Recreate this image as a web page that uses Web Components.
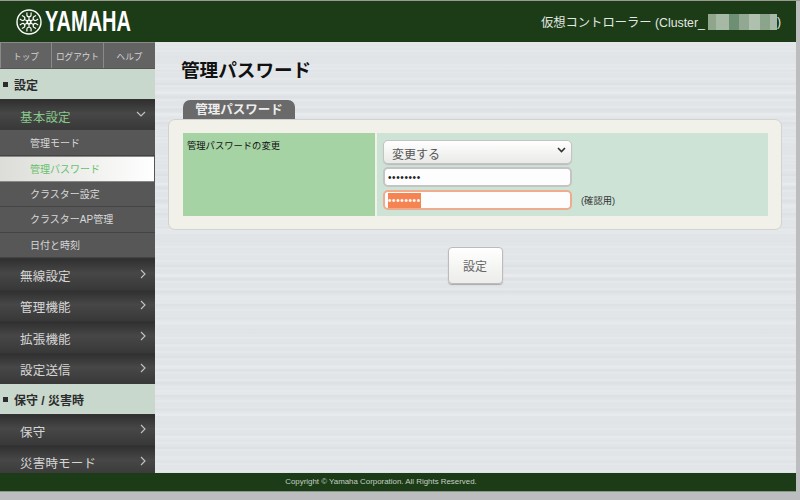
<!DOCTYPE html>
<html lang="ja">
<head>
<meta charset="utf-8">
<title>管理パスワード</title>
<style>
html, body { margin: 0; height: 100%; overflow: hidden; }
body { font-family: "Liberation Sans", "Noto Sans CJK JP", sans-serif; }
</style>
</head>
<body>
<yamaha-app>
  <yamaha-header slot="header" title-text="仮想コントローラー (Cluster_"></yamaha-header>
  <side-nav slot="nav">
    <nav-tools></nav-tools>
    <nav-section>設定</nav-section>
    <nav-group open>基本設定</nav-group>
    <nav-sub>管理モード</nav-sub>
    <nav-sub active>管理パスワード</nav-sub>
    <nav-sub>クラスター設定</nav-sub>
    <nav-sub>クラスターAP管理</nav-sub>
    <nav-sub>日付と時刻</nav-sub>
    <nav-group>無線設定</nav-group>
    <nav-group>管理機能</nav-group>
    <nav-group>拡張機能</nav-group>
    <nav-group>設定送信</nav-group>
    <nav-section>保守 / 災害時</nav-section>
    <nav-group>保守</nav-group>
    <nav-group>災害時モード</nav-group>
  </side-nav>
  <password-page slot="main"></password-page>
  <yamaha-footer slot="footer"></yamaha-footer>
</yamaha-app>

<script>
function define_el(name, html, setup) {
  customElements.define(name, class extends HTMLElement {
    constructor() {
      super();
      this.attachShadow({ mode: 'open' }).innerHTML = html;
    }
    connectedCallback() {
      if (setup) setup(this);
    }
  });
}

const chevron_right = '<svg width="6" height="10" viewBox="0 0 6 10"><path d="M1 1 L5 5 L1 9" fill="none" stroke="#c4c4c4" stroke-width="1.1"/></svg>';
const chevron_down = '<svg width="10" height="6" viewBox="0 0 10 6"><path d="M1 1 L5 5 L9 1" fill="none" stroke="#c4c4c4" stroke-width="1.1"/></svg>';

// three crossed tuning forks, so six fork heads round the hub
const forks = [0, 60, 120, 180, 240, 300].map(function(a) {
  return '<g transform="rotate(' + a + ' 13 13)"><path d="M13 13V7.6M10.9 3.6V5.8Q10.9 7.8 13 7.8Q15.1 7.8 15.1 5.8V3.6" fill="none" stroke="#fff" stroke-width="1.15"/></g>';
}).join('');

define_el('yamaha-app', `
<style>
:host { display: grid; width: 800px; height: 500px; background: #bcbdbf;
  grid-template-columns: 155px 641px 4px; grid-template-rows: 1px 41px 1px 430px 19px 8px;
  grid-template-areas: "top top top" "header header gut" "line line gut" "nav main gut" "footer footer gut" "rest rest rest"; }
.top { grid-area: top; background: #9a9a92; }
.line { grid-area: line; background: linear-gradient(90deg, #8a8a8a 155px, #e4e6e8 155px); }
::slotted([slot="header"]) { grid-area: header; }
::slotted([slot="nav"]) { grid-area: nav; }
::slotted([slot="main"]) { grid-area: main; }
::slotted([slot="footer"]) { grid-area: footer; }
</style>
<div class="top"></div>
<div class="line"></div>
<slot name="header"></slot>
<slot name="nav"></slot>
<slot name="main"></slot>
<slot name="footer"></slot>`);

define_el('yamaha-header', `
<style>
:host { display: flex; align-items: center; justify-content: space-between; background: #1c3c18;
  color: #e4e8e2; padding: 0 15px 0 16px; }
.logo { display: flex; align-items: center; gap: 3px; }
.word { font: bold 29px/1 "Liberation Sans", sans-serif; color: #fff;
  display: inline-block; width: 87px; white-space: nowrap; transform-origin: left center; transform: scaleX(.69); }
.title { font: 12.3px "Liberation Sans", "Noto Sans CJK JP", sans-serif; display: flex; align-items: center; }
.blur { display: inline-block; width: 69px; height: 16px; margin-left: 3px;
  background: linear-gradient(90deg, #8fa68d 0 12%, #a6b9a4 12% 30%, #6f8f74 30% 45%, #92a893 45% 60%, #b0c0ae 60% 75%, #8ba48c 75% 90%, #a8baa7 90%); }
</style>
<div class="logo">
  <svg width="26" height="26" viewBox="0 0 26 26">
    <circle cx="13" cy="13" r="12" fill="none" stroke="#fff" stroke-width="1.4"/>
    ${forks}
    <circle cx="13" cy="13" r="2.6" fill="#fff"/>
    <circle cx="13" cy="13" r="1" fill="#1c3c18"/>
  </svg>
  <span class="word">YAMAHA</span>
</div>
<div class="title"><span id="t"></span><span class="blur"></span><span>)</span></div>`,
  function(el) { el.shadowRoot.getElementById('t').textContent = el.getAttribute('title-text'); });

define_el('side-nav', `
<style>
:host { display: block; background: #555; font-family: "Liberation Sans", "Noto Sans CJK JP", sans-serif; height: 430px; overflow: hidden; }
</style>
<slot></slot>`);

define_el('nav-tools', `
<style>
:host { display: grid; grid-template-columns: 51px 52px 52px; height: 25px; background: #636363; margin-bottom: 1px; }
span { font-size: 8.6px; color: #d4d4d4; display: flex; align-items: center; justify-content: center; border-left: 1px solid #8a8a8a; }
span:first-child { border-left: 0; }
</style>
<span>トップ</span><span>ログアウト</span><span>ヘルプ</span>`);

define_el('nav-section', `
<style>
:host { display: flex; align-items: center; height: 30px; background: #c8d8cd; color: #2c2c2c;
  font-size: 12px; font-weight: bold; padding: 1px 0 0 3px; box-sizing: border-box; gap: 6px; }
i { width: 5px; height: 5px; background: #2c2c2c; display: block; }
</style>
<i></i><span><slot></slot></span>`);

define_el('nav-group', `
<style>
:host { display: flex; align-items: center; justify-content: space-between; height: 31.4px; box-sizing: border-box;
  padding: 2px 8px 0 20px; font-size: 12.5px; color: #d6d6d6; border-top: 1px solid #333;
  background: linear-gradient(#303030, #474747 45%, #383838); letter-spacing: .2px; }
:host([open]) { color: #87c98a; }
svg { display: block; margin-top: -4px; margin-right: 1px; }
</style>
<span><slot></slot></span><span id="c"></span>`,
  function(el) {
    el.shadowRoot.getElementById('c').innerHTML = el.hasAttribute('open') ? chevron_down : chevron_right;
  });

define_el('nav-sub', `
<style>
:host { display: flex; align-items: center; height: 25.6px; box-sizing: border-box; padding: 0 0 1px 30px;
  font-size: 10px; color: #d8d8d8; background: #575757; border-bottom: 1px solid #444; }
:host([active]) { color: #66c16c; margin-right: 1px; background: linear-gradient(90deg, #dcdcd8, #fff); border-bottom: 1px solid #888; border-top: 1px solid #888; }
</style>
<slot></slot>`);

define_el('password-page', `
<style>
:host { display: block; height: 430px; padding: 16px 14px 0 13px; box-sizing: border-box;
  background:
    repeating-linear-gradient(180deg, transparent 0, rgba(255,255,255,.22) 1px, transparent 2px, transparent 7px),
    repeating-linear-gradient(180deg, transparent 0, rgba(90,100,120,.045) 2px, transparent 4px, transparent 13px),
    repeating-linear-gradient(180deg, transparent 0, rgba(255,255,255,.16) 3px, transparent 6px, transparent 23px),
    #e2e5e8;
  font-family: "Liberation Sans", "Noto Sans CJK JP", sans-serif; }
h1 { font-size: 18.6px; line-height: 24px; margin: 0 0 17px 13px; color: #111; }
.tab { width: 112px; height: 19px; margin-left: 15px; box-sizing: border-box; background: #6a6a6a; color: #eee;
  border-radius: 7px 7px 0 0; font-size: 12.5px; font-weight: bold; text-align: center; line-height: 21px; }
.panel { background: #f1f1ea; border: 1px solid #d2d2d0; border-radius: 7px; padding: 13px 13px 13px 14px; height: 111px; box-sizing: border-box; }
.row { display: grid; grid-template-columns: 192px 391px; gap: 2px; height: 83px; }
.head { background: #a5d3a3; font-size: 9.3px; color: #111; padding: 5px 4px; }
.cell { background: #cde3d6; padding: 7px 0 0 6px; display: flex; flex-direction: column; gap: 3px; font-size: 9.3px; }
.line { display: flex; align-items: center; gap: 9px; color: #333; }
.ctl { width: 189px; box-sizing: border-box; border: 2px solid #c4c4c4; border-radius: 5px; background: #fdfdfd;
  height: 20px; display: flex; align-items: center; padding-left: 3px; font-size: 10px; letter-spacing: .6px; color: #222; }
.sel { height: 24px; border-width: 1px; background: linear-gradient(#fff, #e9e9e7); font-size: 12px; letter-spacing: 0; color: #555; justify-content: space-between; padding: 3px 5px 0 8px; box-shadow: 0 1px 1px #bbb; }
.sel svg { margin-top: -7px; }
.err { border-color: #efab8c; }
mark { background: #f58452; color: #fff; padding: 2px 0; }
.actions { display: flex; justify-content: center; margin-top: 17px; }
button { width: 55px; height: 37px; border: 1px solid #bbb; border-radius: 4px; background: linear-gradient(#fff, #ececea);
  font: 12px "Liberation Sans", "Noto Sans CJK JP", sans-serif; color: #666; box-shadow: 0 1px 1px #aaa; padding: 0; }
</style>
<h1>管理パスワード</h1>
<div class="tab">管理パスワード</div>
<div class="panel">
  <div class="row">
    <div class="head">管理パスワードの変更</div>
    <div class="cell">
      <div class="ctl sel"><span>変更する</span><svg width="9" height="6" viewBox="0 0 9 6"><path d="M1 1 L4.5 4.5 L8 1" fill="none" stroke="#333" stroke-width="1.6"/></svg></div>
      <div class="ctl">••••••••</div>
      <div class="line"><div class="ctl err"><mark>••••••••</mark></div><span>(確認用)</span></div>
    </div>
  </div>
</div>
<div class="actions"><button>設定</button></div>`);

define_el('yamaha-footer', `
<style>
:host { display: flex; align-items: center; justify-content: center; background: #1c3c18; color: #c4cfc2;
  font: 7.9px "Liberation Sans", sans-serif; padding: 0 34px 1px 0; border-bottom: 1px solid #8a958a; box-sizing: border-box; }
</style>
<span>Copyright © Yamaha Corporation. All Rights Reserved.</span>`);
</script>
</body>
</html>
